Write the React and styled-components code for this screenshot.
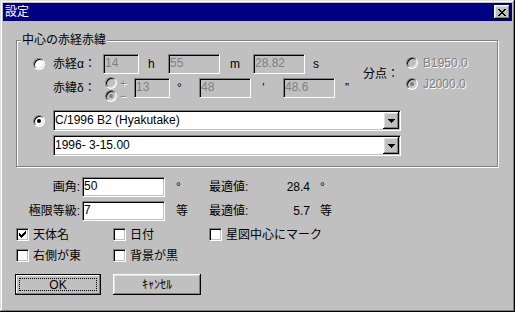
import React from 'react';
import styled, { createGlobalStyle, css } from 'styled-components';

const GlobalStyle = createGlobalStyle`
  html, body { margin: 0; padding: 0; background: #c0c0c0; }
  * { box-sizing: border-box; }
`;

const sunken = css`
  border: 1px solid;
  border-color: #808080 #fff #fff #808080;
  box-shadow: inset 1px 1px 0 #000, inset -1px -1px 0 #c0c0c0;
`;

const raised = css`
  box-shadow: inset -1px -1px 0 #000, inset 1px 1px 0 #fff,
    inset -2px -2px 0 #808080, inset 2px 2px 0 #dfdfdf;
`;

const disabledText = css`
  color: #808080;
  text-shadow: 1px 1px 0 #fff;
`;

const Window = styled.div`
  width: 515px;
  height: 312px;
  padding: 3px;
  display: flex;
  flex-direction: column;
  background: #c0c0c0;
  color: #000;
  font-family: "Liberation Sans", "Noto Sans CJK JP", sans-serif;
  font-size: 12px;
  line-height: 14px;
  box-shadow: inset -1px -1px 0 #000, inset 1px 1px 0 #dfdfdf,
    inset -2px -2px 0 #808080, inset 2px 2px 0 #fff;
`;

const TitleBar = styled.div`
  height: 18px;
  flex: none;
  display: flex;
  align-items: center;
  justify-content: space-between;
  padding: 0 2px 0 2px;
  background: #000080;
`;

const Title = styled.span`
  color: #fff;
  font-size: 12px;
  line-height: 14px;
`;

const CloseButton = styled.span`
  width: 16px;
  height: 14px;
  display: flex;
  align-items: center;
  justify-content: center;
  background: #c0c0c0;
  ${raised};
`;

const Body = styled.div`
  flex: 1;
  display: flex;
  flex-direction: column;
  padding-left: 13px;
`;

const GroupBox = styled.div`
  position: relative;
  width: 482px;
  margin-top: 19px;
  padding: 13px 0 10px 16px;
  border: 1px solid #808080;
  box-shadow: 1px 1px 0 #fff, inset 1px 1px 0 #fff;
`;

const Legend = styled.span`
  position: absolute;
  top: -8px;
  left: 4px;
  padding: 0 1px;
  background: #c0c0c0;
  line-height: 14px;
`;

const UpperBlock = styled.div`
  display: flex;
  align-items: flex-start;
`;

const CoordBlock = styled.div`
  width: 330px;
  flex: none;
  display: flex;
  flex-direction: column;
  gap: 4px;
`;

const CoordRow = styled.div`
  height: ${p => p.$h}px;
  display: flex;
  align-items: ${p => (p.$top ? 'flex-start' : 'center')};
`;

const RadioSlot = styled.div`
  width: 20px;
  height: 100%;
  flex: none;
  display: flex;
  align-items: center;
`;

const FieldLabel = styled.span`
  width: ${p => p.$w}px;
  flex: none;
  line-height: 20px;
  white-space: nowrap;
`;

const TextBox = styled.div`
  ${sunken};
  width: ${p => p.$w}px;
  height: 20px;
  flex: none;
  padding: 0 1px;
  line-height: 17px;
  background: ${p => (p.$disabled ? '#c0c0c0' : '#fff')};
  color: ${p => (p.$disabled ? '#808080' : '#000')};
  white-space: nowrap;
  overflow: hidden;
`;

const Unit = styled.span`
  width: ${p => (p.$w ? `${p.$w}px` : 'auto')};
  flex: none;
  padding-left: ${p => p.$pad || 0}px;
  line-height: 20px;
`;

const SignPair = styled.div`
  width: 29px;
  flex: none;
  margin-top: -1px;
  display: flex;
  flex-direction: column;
  gap: 1px;
`;

const SignOption = styled.div`
  height: 12px;
  display: flex;
  align-items: center;
  gap: 3px;
`;

const SignText = styled.span`
  font-size: 11px;
  line-height: 12px;
  ${disabledText};
`;

const EpochLabel = styled.span`
  width: 36px;
  flex: none;
  margin-top: 14px;
  line-height: 12px;
  white-space: nowrap;
`;

const EpochCol = styled.div`
  margin-left: 7px;
  margin-top: -2px;
  display: flex;
  flex-direction: column;
`;

const EpochOption = styled.div`
  height: 21px;
  display: flex;
  align-items: center;
  gap: 5px;
`;

const DisabledLabel = styled.span`
  ${disabledText};
`;

const ComboStack = styled.div`
  margin-top: 8px;
  display: flex;
  flex-direction: column;
  gap: 4px;
`;

const ComboRow = styled.div`
  height: 21px;
  display: flex;
  align-items: center;
`;

const Combo = styled.div`
  ${sunken};
  width: 348px;
  height: 21px;
  padding: 1px;
  display: flex;
  align-items: center;
  background: #fff;
`;

const ComboText = styled.span`
  flex: 1;
  line-height: 17px;
  white-space: nowrap;
`;

const DropButton = styled.span`
  width: 16px;
  height: 17px;
  flex: none;
  display: flex;
  align-items: center;
  justify-content: center;
  background: #c0c0c0;
  ${raised};
`;

const FormGrid = styled.div`
  margin-top: 10px;
  display: grid;
  grid-template-columns: 66px 83px 44px 61px 40px auto;
  grid-auto-rows: 20px;
  row-gap: 4px;
  align-items: center;
`;

const FormLabel = styled.span`
  text-align: right;
  padding-right: 2px;
  white-space: nowrap;
`;

const FormUnit = styled.span`
  padding-left: ${p => p.$pad}px;
  white-space: nowrap;
`;

const FormValue = styled.span`
  text-align: right;
`;

const CheckGrid = styled.div`
  margin-top: 7px;
  display: grid;
  grid-template-columns: 97px 96px auto;
  grid-auto-rows: 13px;
  row-gap: 8px;
`;

const CheckItem = styled.label`
  display: flex;
  align-items: center;
  gap: 4px;
  white-space: nowrap;
`;

const CheckBox = styled.span`
  ${sunken};
  width: 13px;
  height: 13px;
  flex: none;
  display: flex;
  align-items: center;
  justify-content: center;
  background: #fff;
`;

const ButtonRow = styled.div`
  margin-top: 12px;
  margin-left: -1px;
  display: flex;
  gap: 12px;
`;

const PushButton = styled.div`
  position: relative;
  width: ${p => p.$w}px;
  height: 21px;
  display: flex;
  align-items: center;
  justify-content: center;
  background: #c0c0c0;
  ${p =>
    p.$default
      ? css`
          border: 1px solid #000;
          box-shadow: inset -1px -1px 0 #808080, inset 1px 1px 0 #fff;
        `
      : raised};
`;

const FocusRing = styled.span`
  position: absolute;
  inset: 3px;
  border: 1px dotted #000;
`;

const RadioCircle = styled.span`
  position: relative;
  width: 12px;
  height: 12px;
  flex: none;
  display: inline-block;
  border-radius: 50%;
  border: 1px solid;
  border-color: #808080 #fff #fff #808080;
  background: ${p => (p.$disabled ? '#c0c0c0' : '#fff')};
  box-shadow: inset 1px 1px 0 #000, inset -1px -1px 0 #dfdfdf;
  &::after {
    content: '';
    display: ${p => (p.$checked ? 'block' : 'none')};
    position: absolute;
    left: 3px;
    top: 3px;
    width: 4px;
    height: 4px;
    border-radius: 50%;
    background: ${p => (p.$disabled ? '#808080' : '#000')};
  }
`;

const Radio = ({ checked, disabled }) => (
  <RadioCircle $checked={checked} $disabled={disabled} />
);

const Pixels = ({ w, h, rects }) => (
  <svg width={w} height={h} viewBox={`0 0 ${w} ${h}`} shapeRendering="crispEdges">
    {rects.map(([x, y, rw], i) => (
      <rect key={i} x={x} y={y} width={rw} height={1} fill="#000" />
    ))}
  </svg>
);

const CloseGlyph = () => (
  <Pixels
    w={8}
    h={7}
    rects={[
      [0, 0, 2], [6, 0, 2],
      [1, 1, 2], [5, 1, 2],
      [2, 2, 4],
      [3, 3, 2],
      [2, 4, 4],
      [1, 5, 2], [5, 5, 2],
      [0, 6, 2], [6, 6, 2],
    ]}
  />
);

const CheckGlyph = () => (
  <Pixels
    w={7}
    h={7}
    rects={[
      [6, 0, 1],
      [5, 1, 2],
      [0, 2, 1], [4, 2, 3],
      [0, 3, 2], [3, 3, 3],
      [0, 4, 5],
      [1, 5, 3],
      [2, 6, 1],
    ]}
  />
);

const ArrowGlyph = () => (
  <Pixels w={7} h={4} rects={[[0, 0, 7], [1, 1, 5], [2, 2, 3], [3, 3, 1]]} />
);

const Check = ({ checked, children }) => (
  <CheckItem>
    <CheckBox>{checked && <CheckGlyph />}</CheckBox>
    {children}
  </CheckItem>
);

export default function App() {
  return (
    <>
      <GlobalStyle />
      <Window>
        <TitleBar>
          <Title>設定</Title>
          <CloseButton>
            <CloseGlyph />
          </CloseButton>
        </TitleBar>
        <Body>
          <GroupBox>
            <Legend>中心の赤経赤緯</Legend>
            <UpperBlock>
              <CoordBlock>
                <CoordRow $h={20}>
                  <RadioSlot>
                    <Radio />
                  </RadioSlot>
                  <FieldLabel $w={50}>赤経α：</FieldLabel>
                  <TextBox $w={36} $disabled>14</TextBox>
                  <Unit $w={29} $pad={9}>h</Unit>
                  <TextBox $w={52} $disabled>55</TextBox>
                  <Unit $w={33} $pad={10}>m</Unit>
                  <TextBox $w={52} $disabled>28.82</TextBox>
                  <Unit $pad={8}>s</Unit>
                </CoordRow>
                <CoordRow $h={24} $top>
                  <RadioSlot />
                  <FieldLabel $w={52}>赤緯δ：</FieldLabel>
                  <SignPair>
                    <SignOption>
                      <Radio disabled />
                      <SignText>+</SignText>
                    </SignOption>
                    <SignOption>
                      <Radio disabled checked />
                      <SignText>−</SignText>
                    </SignOption>
                  </SignPair>
                  <TextBox $w={36} $disabled>13</TextBox>
                  <Unit $w={29} $pad={7}>°</Unit>
                  <TextBox $w={52} $disabled>48</TextBox>
                  <Unit $w={32} $pad={11}>’</Unit>
                  <TextBox $w={52} $disabled>48.6</TextBox>
                  <Unit $pad={10}>”</Unit>
                </CoordRow>
              </CoordBlock>
              <EpochLabel>分点：</EpochLabel>
              <EpochCol>
                <EpochOption>
                  <Radio disabled />
                  <DisabledLabel>B1950.0</DisabledLabel>
                </EpochOption>
                <EpochOption>
                  <Radio disabled checked />
                  <DisabledLabel>J2000.0</DisabledLabel>
                </EpochOption>
              </EpochCol>
            </UpperBlock>
            <ComboStack>
              <ComboRow>
                <RadioSlot>
                  <Radio checked />
                </RadioSlot>
                <Combo>
                  <ComboText>C/1996 B2 (Hyakutake)</ComboText>
                  <DropButton>
                    <ArrowGlyph />
                  </DropButton>
                </Combo>
              </ComboRow>
              <ComboRow>
                <RadioSlot />
                <Combo>
                  <ComboText>1996- 3-15.00</ComboText>
                  <DropButton>
                    <ArrowGlyph />
                  </DropButton>
                </Combo>
              </ComboRow>
            </ComboStack>
          </GroupBox>

          <FormGrid>
            <FormLabel>画角:</FormLabel>
            <TextBox $w={83}>50</TextBox>
            <FormUnit $pad={11}>°</FormUnit>
            <span>最適値:</span>
            <FormValue>28.4</FormValue>
            <FormUnit $pad={10}>°</FormUnit>

            <FormLabel>極限等級:</FormLabel>
            <TextBox $w={83}>7</TextBox>
            <FormUnit $pad={11}>等</FormUnit>
            <span>最適値:</span>
            <FormValue>5.7</FormValue>
            <FormUnit $pad={10}>等</FormUnit>
          </FormGrid>

          <CheckGrid>
            <Check checked>天体名</Check>
            <Check>日付</Check>
            <Check>星図中心にマーク</Check>
            <Check>右側が東</Check>
            <Check>背景が黒</Check>
          </CheckGrid>

          <ButtonRow>
            <PushButton $w={86} $default>
              <FocusRing />
              OK
            </PushButton>
            <PushButton $w={88}>ｷｬﾝｾﾙ</PushButton>
          </ButtonRow>
        </Body>
      </Window>
    </>
  );
}
